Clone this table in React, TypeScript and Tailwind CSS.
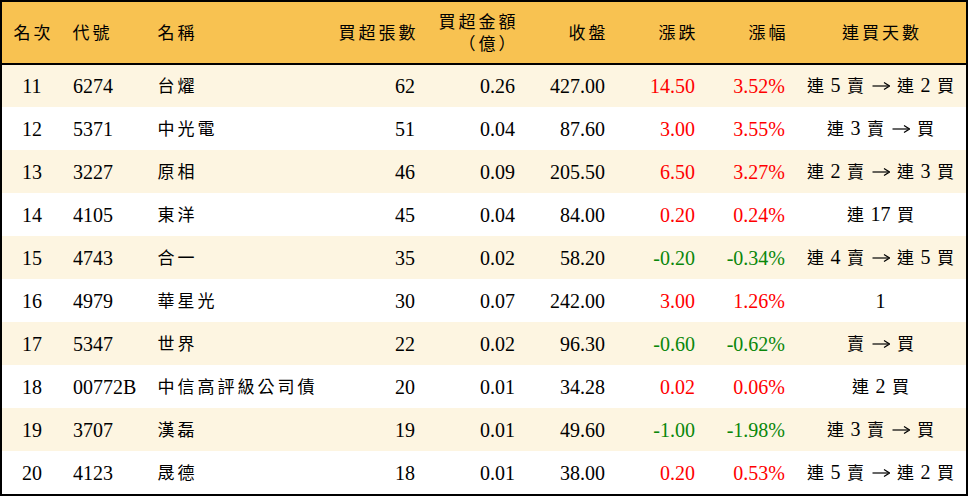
import { Fragment } from "react";

type Row = {
  rank: number;
  code: string;
  name: string;
  lots: number;
  amount: string;
  close: string;
  change: string;
  pct: string;
  streak: string;
};

const rows: Row[] = [
  { rank: 11, code: "6274", name: "台燿", lots: 62, amount: "0.26", close: "427.00", change: "14.50", pct: "3.52%", streak: "連 5 賣 → 連 2 買" },
  { rank: 12, code: "5371", name: "中光電", lots: 51, amount: "0.04", close: "87.60", change: "3.00", pct: "3.55%", streak: "連 3 賣 → 買" },
  { rank: 13, code: "3227", name: "原相", lots: 46, amount: "0.09", close: "205.50", change: "6.50", pct: "3.27%", streak: "連 2 賣 → 連 3 買" },
  { rank: 14, code: "4105", name: "東洋", lots: 45, amount: "0.04", close: "84.00", change: "0.20", pct: "0.24%", streak: "連 17 買" },
  { rank: 15, code: "4743", name: "合一", lots: 35, amount: "0.02", close: "58.20", change: "-0.20", pct: "-0.34%", streak: "連 4 賣 → 連 5 買" },
  { rank: 16, code: "4979", name: "華星光", lots: 30, amount: "0.07", close: "242.00", change: "3.00", pct: "1.26%", streak: "1" },
  { rank: 17, code: "5347", name: "世界", lots: 22, amount: "0.02", close: "96.30", change: "-0.60", pct: "-0.62%", streak: "賣 → 買" },
  { rank: 18, code: "00772B", name: "中信高評級公司債", lots: 20, amount: "0.01", close: "34.28", change: "0.02", pct: "0.06%", streak: "連 2 買" },
  { rank: 19, code: "3707", name: "漢磊", lots: 19, amount: "0.01", close: "49.60", change: "-1.00", pct: "-1.98%", streak: "連 3 賣 → 買" },
  { rank: 20, code: "4123", name: "晟德", lots: 18, amount: "0.01", close: "38.00", change: "0.20", pct: "0.53%", streak: "連 5 賣 → 連 2 買" },
];

// thin Times-style arrow
function Arrow() {
  return (
    <span className="inline-block w-5 text-center">
      <svg width="18" height="10" viewBox="0 0 18 10" className="inline-block align-[1px]" aria-hidden>
        <path d="M0.5 5H16" stroke="black" strokeWidth="1.2" />
        <path d="M12 1.5 17.5 5 12 8.5" fill="none" stroke="black" strokeWidth="1.2" />
      </svg>
    </span>
  );
}

// CJK glyphs in the source are a thin Ming face on a 20px grid; draw each in a 20px cell
function Txt({ s }: { s: string }) {
  return (
    <>
      {Array.from(s).map((c, i) => {
        if (c === "→") return <Arrow key={i} />;
        if (/[\u3000-\u9fff\uff00-\uffef]/.test(c))
          return (
            <span key={i} className="inline-block w-5 text-center text-[17px]">
              {c}
            </span>
          );
        return <Fragment key={i}>{c}</Fragment>;
      })}
    </>
  );
}

const widths = ["w-[60px]", "w-[86px]", "w-[187px]", "w-[90px]", "w-[100px]", "w-[90px]", "w-[90px]", "w-[90px]", "w-[171px]"];

export default function App() {
  return (
    <div className="box-border h-[496px] w-[968px] border-2 border-black bg-white font-['Liberation_Serif','Noto_Sans_CJK_TC',serif] text-[20px] leading-5 text-black">
      <table className="w-full table-fixed border-collapse">
        <colgroup>
          {widths.map((w, i) => (
            <col key={i} className={w} />
          ))}
        </colgroup>
        <thead>
          <tr className="h-[62px] border-b-2 border-black bg-[#F8C251]">
            <th className="text-center font-normal"><Txt s="名次" /></th>
            <th className="pl-[9px] text-left font-normal"><Txt s="代號" /></th>
            <th className="pl-2 text-left font-normal"><Txt s="名稱" /></th>
            <th className="pr-2 text-right font-normal"><Txt s="買超張數" /></th>
            <th className="pr-2 text-right font-normal">
              <Txt s="買超金額" />
              <br />
              <Txt s="（億）" />
            </th>
            <th className="pr-2 text-right font-normal"><Txt s="收盤" /></th>
            <th className="pr-2 text-right font-normal"><Txt s="漲跌" /></th>
            <th className="pr-2 text-right font-normal"><Txt s="漲幅" /></th>
            <th className="text-center font-normal"><Txt s="連買天數" /></th>
          </tr>
        </thead>
        <tbody>
          {rows.map((r, i) => {
            const color = r.change.startsWith("-") ? "text-[#0A870A]" : "text-[#FF0000]";
            return (
              <tr key={r.rank} className={i % 2 === 0 ? "h-[43px] bg-[#FDF5E1]" : "h-[43px] bg-white"}>
                <td className="text-center">{r.rank}</td>
                <td className="pl-[11px]">{r.code}</td>
                <td className="pl-2 whitespace-nowrap"><Txt s={r.name} /></td>
                <td className="pr-[10px] text-right">{r.lots}</td>
                <td className="pr-[10px] text-right">{r.amount}</td>
                <td className="pr-[10px] text-right">{r.close}</td>
                <td className={`pr-[10px] text-right ${color}`}>{r.change}</td>
                <td className={`pr-[10px] text-right ${color}`}>{r.pct}</td>
                <td className="text-center whitespace-nowrap"><Txt s={r.streak} /></td>
              </tr>
            );
          })}
        </tbody>
      </table>
    </div>
  );
}
